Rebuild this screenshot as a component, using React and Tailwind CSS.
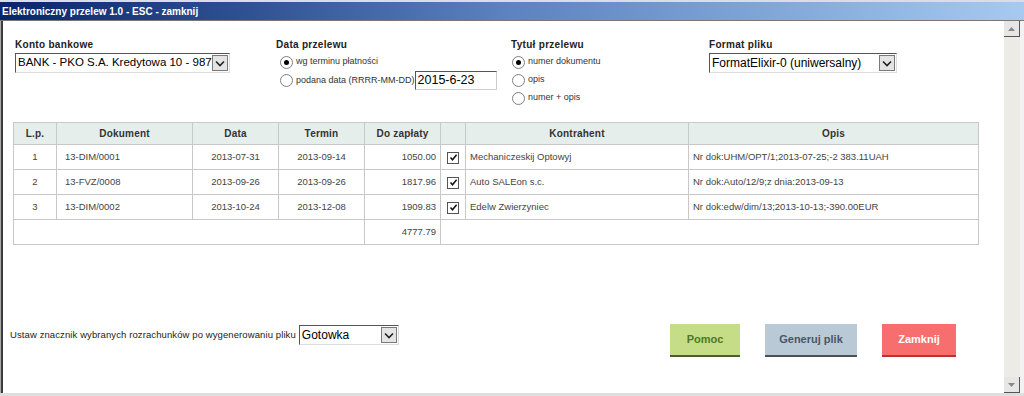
import React from 'react';

const rows = [
  { lp: 1, doc: '13-DIM/0001', data: '2013-07-31', termin: '2013-09-14', kwota: '1050.00', kontr: 'Mechaniczeskij Optowyj', opis: 'Nr dok:UHM/OPT/1;2013-07-25;-2 383.11UAH' },
  { lp: 2, doc: '13-FVZ/0008', data: '2013-09-26', termin: '2013-09-26', kwota: '1817.96', kontr: 'Auto SALEon s.c.', opis: 'Nr dok:Auto/12/9;z dnia:2013-09-13' },
  { lp: 3, doc: '13-DIM/0002', data: '2013-10-24', termin: '2013-12-08', kwota: '1909.83', kontr: 'Edelw Zwierzyniec', opis: 'Nr dok:edw/dim/13;2013-10-13;-390.00EUR' },
];

const Arrow = () => (
  <span className="shrink-0 w-[16px] h-[16px] flex items-center justify-center bg-[#e4e4e4] border border-[#7a7a7a]">
    <svg width="10" height="7" viewBox="0 0 10 7">
      <path d="M1 1.5 L5 5.5 L9 1.5" fill="none" stroke="#222" strokeWidth="1.6" />
    </svg>
  </span>
);

const Select = ({ value, className, textSize = 'text-[12px]' }) => (
  <div className={`flex items-center justify-between h-[20px] bg-white border-t border-l border-t-[#555] border-l-[#555] border-b border-r border-b-[#ddd] border-r-[#ddd] pl-[2px] pr-[1px] ${className}`}>
    <span className={`${textSize} text-black leading-none whitespace-nowrap`}>{value}</span>
    <Arrow />
  </div>
);

const Radio = ({ checked, label }) => (
  <div className="flex items-center gap-[3px] h-[18px]">
    <span className="w-[13px] h-[13px] rounded-full border border-[#7f7f7f] bg-white flex items-center justify-center">
      {checked && <span className="w-[5px] h-[5px] rounded-full bg-black" />}
    </span>
    <span className="text-[9px] text-[#333] whitespace-nowrap">{label}</span>
  </div>
);

const Check = () => (
  <span className="inline-flex w-[12px] h-[12px] border border-[#555] bg-white items-center justify-center">
    <svg width="9" height="9" viewBox="0 0 9 9">
      <path d="M1.5 4.5 L3.5 6.8 L7.6 1.8" fill="none" stroke="#111" strokeWidth="1.5" />
    </svg>
  </span>
);

const Label = ({ children }) => (
  <div className="text-[10px] font-bold text-[#222] tracking-[0.3px] h-[16px]">{children}</div>
);

export default function App() {
  const th = 'border border-[#c8c8c8] bg-[#e6eeec] font-bold text-[10px] text-[#333] h-[22px] text-center tracking-[0.2px]';
  const td = 'border border-[#c8c8c8] text-[9.5px] text-[#444] h-[25px]';
  return (
    <div className="w-[1024px] h-[396px] bg-white flex flex-col overflow-hidden" style={{ fontFamily: '"Liberation Sans", Arial, sans-serif' }}>
      <div className="h-[20px] border-t-2 border-[#d8dde6] bg-gradient-to-r from-[#0a246a] via-[#5d83c0] to-[#a6caf0] flex items-center pl-[2px]">
        <span className="text-white font-bold text-[10px]">Elektroniczny przelew 1.0 - ESC - zamknij</span>
      </div>
      <div className="flex flex-1 min-h-0 border-t border-[#777]">
        <div className="w-[3px] bg-[#3c3c3c] border-l border-[#aaa]" />
        <div className="flex-1 flex flex-col pt-[16px]">
          <div className="flex pl-[12px]">
            <div className="w-[261px]">
              <Label>Konto bankowe</Label>
              <Select value="BANK - PKO S.A. Kredytowa 10 - 987" textSize="text-[11.5px]" className="w-[215px]" />
            </div>
            <div className="w-[235px]">
              <Label>Data przelewu</Label>
              <div className="pl-[4px]">
                <Radio checked label="wg terminu płatności" />
                <div className="flex items-center">
                  <Radio label="podana data (RRRR-MM-DD)" />
                  <div className="w-[82px] h-[19px] border-t border-l border-[#555] border-b border-r border-b-[#ccc] border-r-[#ccc] text-[12.5px] leading-none flex items-center pl-[2px]">2015-6-23</div>
                </div>
              </div>
            </div>
            <div className="w-[198px]">
              <Label>Tytuł przelewu</Label>
              <div className="pl-[1px]">
                <Radio checked label="numer dokumentu" />
                <Radio label="opis" />
                <Radio label="numer + opis" />
              </div>
            </div>
            <div>
              <Label>Format pliku</Label>
              <Select value="FormatElixir-0 (uniwersalny)" className="w-[188px]" />
            </div>
          </div>

          <table className="ml-[10px] mt-[15px] w-[966px] border-collapse table-fixed">
            <colgroup>
              <col className="w-[43px]" />
              <col className="w-[136px]" />
              <col className="w-[86px]" />
              <col className="w-[86px]" />
              <col className="w-[76px]" />
              <col className="w-[25px]" />
              <col className="w-[223px]" />
              <col />
            </colgroup>
            <thead>
              <tr>
                <th className={th}>L.p.</th>
                <th className={th}>Dokument</th>
                <th className={th}>Data</th>
                <th className={th}>Termin</th>
                <th className={th}>Do zapłaty</th>
                <th className={th}></th>
                <th className={th}>Kontrahent</th>
                <th className={th}>Opis</th>
              </tr>
            </thead>
            <tbody>
              {rows.map((r) => (
                <tr key={r.lp}>
                  <td className={`${td} text-center`}>{r.lp}</td>
                  <td className={`${td} pl-[8px]`}>{r.doc}</td>
                  <td className={`${td} text-center`}>{r.data}</td>
                  <td className={`${td} text-center`}>{r.termin}</td>
                  <td className={`${td} text-right pr-[4px]`}>{r.kwota}</td>
                  <td className={`${td} text-center pt-[4px]`}><Check /></td>
                  <td className={`${td} pl-[4px]`}>{r.kontr}</td>
                  <td className={`${td} pl-[4px]`}>{r.opis}</td>
                </tr>
              ))}
              <tr>
                <td className={`${td} h-[23px]`} colSpan={4}></td>
                <td className={`${td} h-[23px] text-right pr-[4px]`}>4777.79</td>
                <td className={`${td} h-[23px]`} colSpan={3}></td>
              </tr>
            </tbody>
          </table>

          <div className="flex items-start mt-[79px] pl-[7px]">
            <div className="flex items-center mt-[1px]">
              <span className="text-[9.5px] text-[#222] whitespace-nowrap mr-[3px] tracking-[0.1px]">Ustaw znacznik wybranych rozrachunków po wygenerowaniu pliku</span>
              <Select value="Gotowka" className="w-[100px] h-[19px]" />
            </div>
            <div className="flex ml-auto mr-[48px] gap-[25px]">
              <button className="w-[70px] h-[33px] bg-[#c5dd86] border-b-2 border-[#4f5a3a] text-[#4b7a23] font-bold text-[11px]">Pomoc</button>
              <button className="w-[92px] h-[33px] bg-[#bac9d6] border-b-2 border-[#4a4f58] text-[#4a5568] font-bold text-[11px]">Generuj plik</button>
              <button className="w-[74px] h-[33px] bg-[#f86e6e] border-b-2 border-[#b23434] text-white font-bold text-[11px]">Zamknij</button>
            </div>
          </div>
        </div>
        <div className="w-[16px] bg-[#ecebe6] flex flex-col justify-between">
          <div className="h-[16px] bg-[#e6e6e6] border-r border-b border-[#555] flex items-center justify-center">
            <svg width="7" height="4" viewBox="0 0 7 4"><path d="M0 4 L3.5 0 L7 4 Z" fill="#888" /></svg>
          </div>
          <div className="h-[16px] bg-[#e6e6e6] border-r border-b border-[#555] flex items-center justify-center">
            <svg width="7" height="4" viewBox="0 0 7 4"><path d="M0 0 L3.5 4 L7 0 Z" fill="#888" /></svg>
          </div>
        </div>
        <div className="w-[4px] bg-[#f2f2f2]" />
      </div>
      <div className="h-[3px] bg-[#dedede]" />
    </div>
  );
}
